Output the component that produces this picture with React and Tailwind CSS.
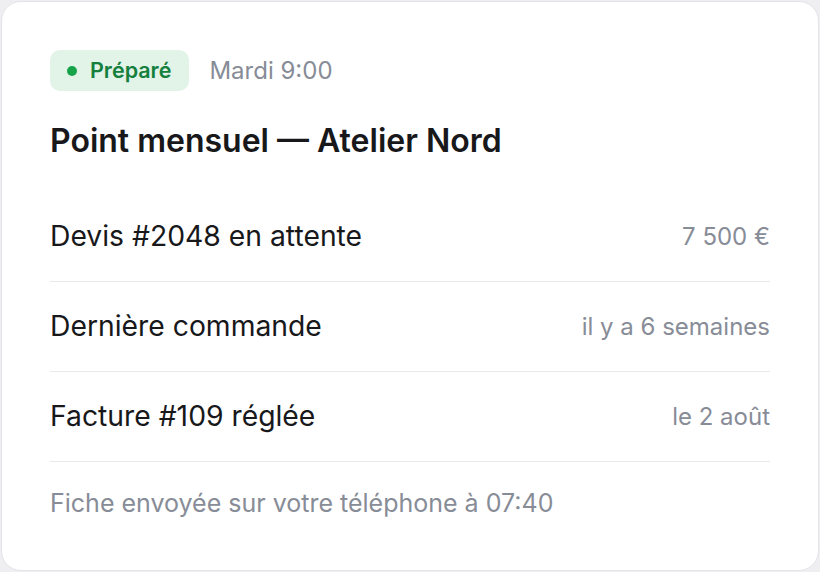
import React from "react";

const rows = [
  { label: "Devis #2048 en attente", meta: "7 500 €" },
  { label: "Dernière commande", meta: "il y a 6 semaines" },
  { label: "Facture #109 réglée", meta: "le 2 août" },
];

export default function App() {
  return (
    <div className="h-screen bg-[#efeff2] p-px font-['Inter',sans-serif]">
      <div className="flex h-full flex-col rounded-[20px] border border-[#e4e4e8] bg-white px-12 pt-12">
        {/* Status + time */}
        <div className="flex items-center gap-5">
          <span className="flex h-[41px] items-center gap-[13px] rounded-[10px] bg-[#e2f3e8] pl-[17px] pr-[18px] text-[21.5px] font-semibold text-[#15803d]">
            <span className="h-2.5 w-2.5 rounded-full bg-[#16a34a]" />
            Préparé
          </span>
          <span className="text-[24px] text-[#878c97]">Mardi 9:00</span>
        </div>

        <h1 className="mt-[30px] mb-[31px] text-[32px] leading-10 font-semibold text-[#18181b]">
          Point mensuel — Atelier Nord
        </h1>

        <div>
          {rows.map((row) => (
            <div
              key={row.label}
              className="flex h-[90px] items-center justify-between border-b border-[#e8e8ed]"
            >
              <span className="text-[28.3px] text-[#18181b]">{row.label}</span>
              <span className="text-[24px] text-[#878c97]">{row.meta}</span>
            </div>
          ))}
        </div>

        <p className="pt-[25px] text-[25px] leading-8 text-[#878c97]">
          Fiche envoyée sur votre téléphone à 07:40
        </p>
      </div>
    </div>
  );
}
